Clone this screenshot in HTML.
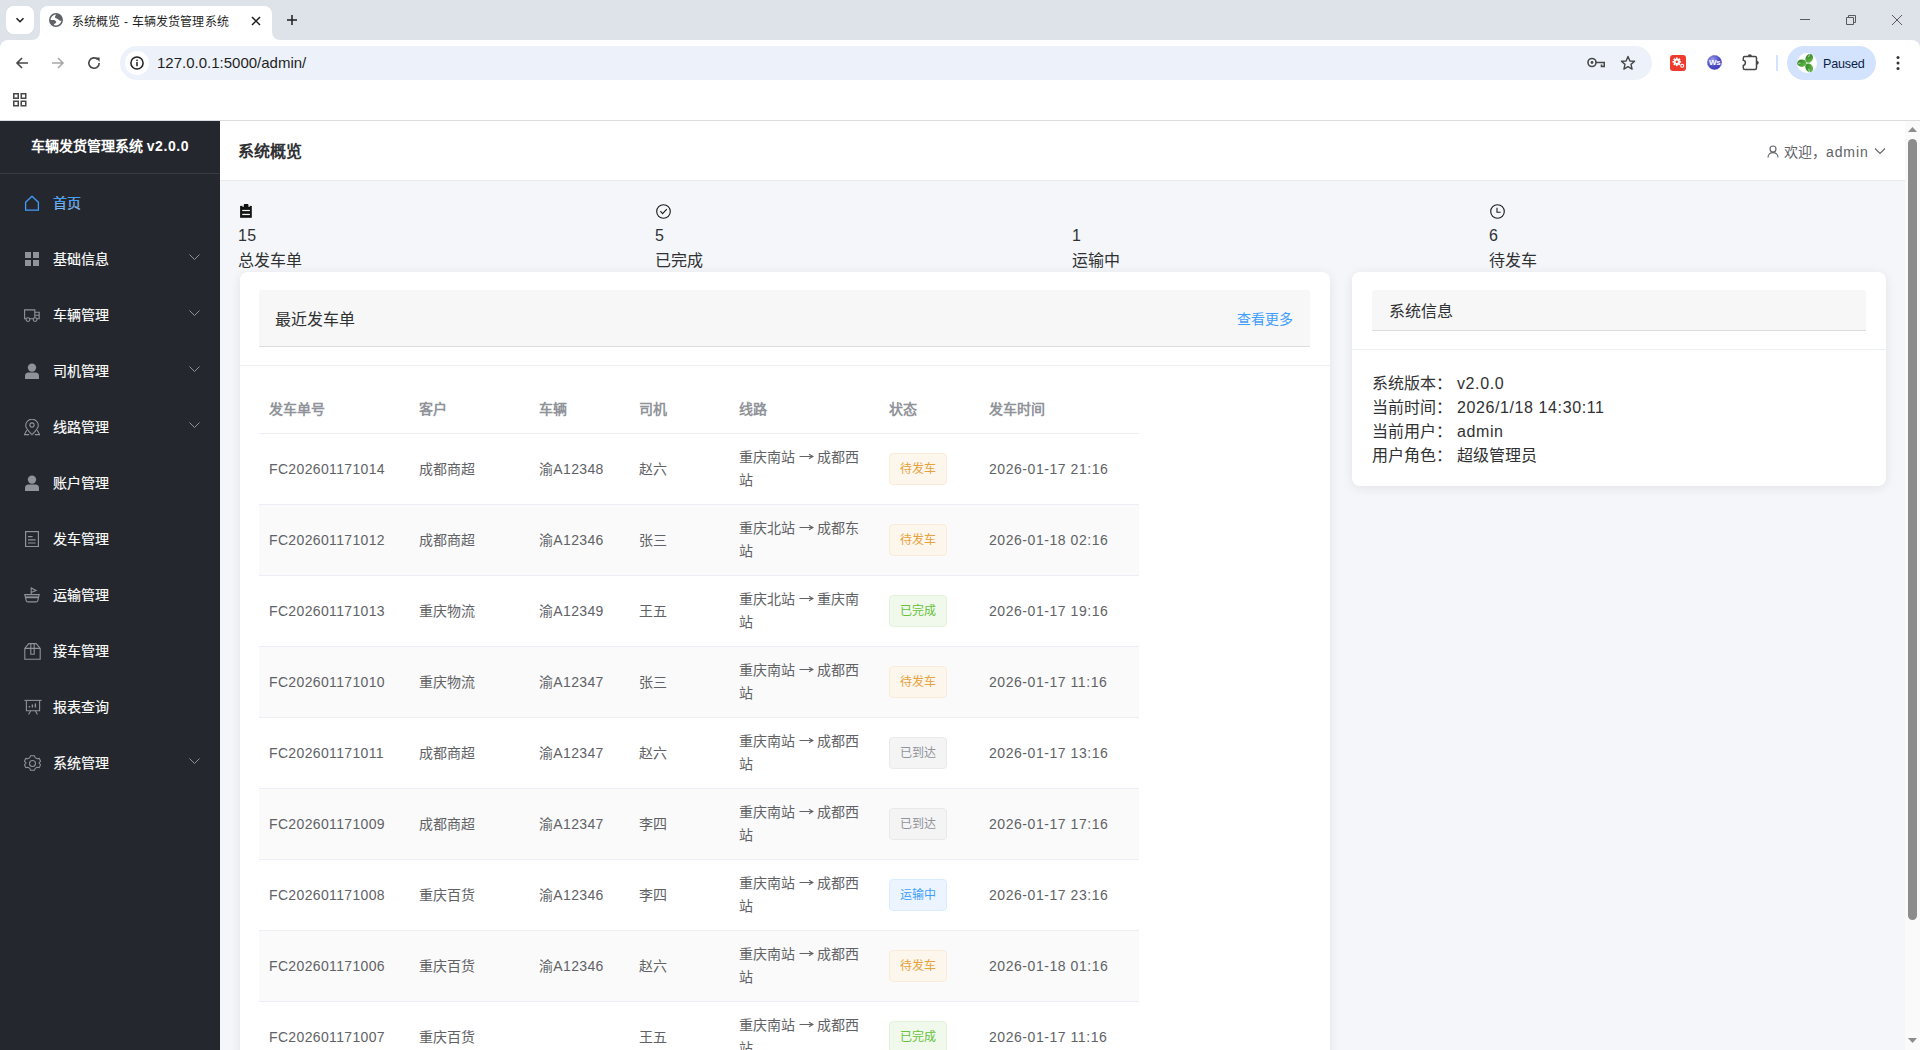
<!DOCTYPE html>
<html lang="zh-CN"><head><meta charset="utf-8"><title>系统概览 - 车辆发货管理系统</title>
<style>
*{box-sizing:border-box;margin:0;padding:0}
html,body{width:1920px;height:1050px;overflow:hidden;background:#fff}
body{position:relative;font-family:"Liberation Sans",sans-serif;color:#303133}
.abs{position:absolute}
svg{display:block}
/* browser chrome */
#tabbar{left:0;top:0;width:1920px;height:48px;background:#dee3ea}
#tabbtn{left:6px;top:6px;width:28px;height:28px;border-radius:8px;background:#fff}
#tab{left:40px;top:6px;width:232px;height:34px;background:#fff;border-radius:8px 8px 0 0}
.flare{width:8px;height:8px;top:32px;background:#fff}
.flare i{position:absolute;left:0;top:0;width:8px;height:8px;background:#dee3ea}
#tabtitle{left:72px;top:14px;letter-spacing:0.15px;font-size:12px;line-height:16px;color:#1f1f1f;white-space:nowrap}
#toolbar{left:0;top:40px;width:1920px;height:80px;background:#fff;border-radius:8px 8px 0 0}
#tbline{left:0;top:120px;width:1920px;height:1px;background:#dadce0}
#omni{left:120px;top:46px;width:1532px;height:34px;border-radius:17px;background:#edf2fa}
#url{left:157px;top:54px;font-size:15px;line-height:18px;color:#1f1f1f;white-space:nowrap}
#paused{left:1787px;top:46px;width:89px;height:34px;border-radius:17px;background:#d3e3fd}
#pausedtxt{left:1823px;top:56px;font-size:12.6px;letter-spacing:-0.2px;line-height:16px;color:#0b1d46;white-space:nowrap}
/* page */
#sidebar{left:0;top:121px;width:220px;height:929px;background:#24272d}
#logo{left:0;top:121px;width:220px;height:53px;border-bottom:1px solid #383b42;color:#fff;font-weight:bold;font-size:14px;line-height:20px;text-align:center;padding-top:15px;white-space:nowrap}
.mi{left:0;width:220px;height:56px;color:#fff;font-size:14px;-webkit-text-stroke:0.15px #fff}
.mi .t{position:absolute;left:53px;top:19px;line-height:20px;white-space:nowrap}
.mi .ic{position:absolute;left:24px;top:21px}
.mi .ar{position:absolute;left:189px;top:24px}
#header{left:220px;top:121px;width:1685px;height:60px;background:#fff;border-bottom:1px solid #e6e9ef}
#htitle{left:238px;top:142px;font-size:16px;line-height:20px;font-weight:bold;color:#303133;white-space:nowrap}
#huser{left:1784px;top:142px;font-size:14px;line-height:20px;color:#606266;white-space:nowrap}
#main{left:220px;top:181px;width:1685px;height:869px;background:#f4f6f9}
#sb{left:1905px;top:121px;width:15px;height:929px;background:#fafafa}
#thumb{left:1908px;top:139px;width:9px;height:781px;border-radius:5px;background:#8c8c8c}


.stat{top:199px;width:417px;font-size:16px;line-height:24px;color:#303133}
.stat .n{letter-spacing:0.3px;position:relative;top:1px}
.stat .l{position:relative;top:2px}
.card{background:#fff;border-radius:8px;box-shadow:0 2px 12px rgba(0,0,0,0.08)}
.chd{border-bottom:1px solid #ebeef5}
.hbox{background:#f7f7f7;border-bottom:1px solid #dcdcdc;border-radius:3px 3px 0 0}
.cell{position:absolute;font-size:14px;line-height:23px;color:#606266;white-space:nowrap}
.th{font-weight:bold;color:#909399}
.row{position:absolute;left:259px;width:880px;height:71px;border-bottom:1px solid #ebeef5}
.row.s{background:#fafafa}
.tag{position:absolute;left:889px;width:58px;height:32px;border-radius:4px;border:1px solid;font-size:12px;line-height:30px;text-align:center}
.tw{background:#fdf6ec;border-color:#faecd8;color:#e6a23c}
.ts{background:#f0f9eb;border-color:#e1f3d8;color:#67c23a}
.ti{background:#f4f4f5;border-color:#e9e9eb;color:#909399}
.tp{background:#ecf5ff;border-color:#d9ecff;color:#409eff}
.lat{letter-spacing:0.35px}
.dat{letter-spacing:0.55px}
.info{position:absolute;left:1372px;font-size:16px;line-height:24px;color:#303133;white-space:nowrap}
</style></head><body>
<div id="tabbar" class="abs"></div>
<div id="tabbtn" class="abs"></div>
<svg class="abs" style="left:14px;top:14px" width="12" height="12" viewBox="0 0 12 12"><path d="M2.5 4.2 L6 7.7 L9.5 4.2" fill="none" stroke="#1f1f1f" stroke-width="1.6"/></svg>
<div id="tab" class="abs"></div>
<div class="abs flare" style="left:32px"><i style="border-bottom-right-radius:8px"></i></div>
<div class="abs flare" style="left:272px"><i style="border-bottom-left-radius:8px"></i></div>
<svg class="abs" style="left:49px;top:13px" width="14" height="14" viewBox="0 0 14 14"><circle cx="7" cy="7" r="6.2" fill="none" stroke="#5f6368" stroke-width="1.5"/><path d="M7.2 0.7 C9.8 0.9 12 2.6 12.9 4.6 L13.3 7.4 C12.4 7.8 11.2 8 10.4 7.5 C9.6 7 9.4 6.1 8.4 5.7 C7.3 5.3 6.1 5.2 6 4.3 C5.9 3.3 6.7 2.3 7.2 1.5 Z" fill="#5f6368"/><path d="M0.7 7 H4.4 C5.6 7 6.6 7.6 7.1 8.6 C7.5 9.6 6.8 10.2 6 10.6 C5.1 11 4.7 11.8 4.5 12.8 C2.3 11.8 0.9 9.8 0.7 7 Z" fill="#5f6368"/></svg>
<div id="tabtitle" class="abs">系统概览 - 车辆发货管理系统</div>
<svg class="abs" style="left:251px;top:16px" width="10" height="10" viewBox="0 0 10 10"><path d="M1 1 L9 9 M9 1 L1 9" stroke="#1f1f1f" stroke-width="1.5"/></svg>
<svg class="abs" style="left:286px;top:14px" width="12" height="12" viewBox="0 0 12 12"><path d="M6 1 V11 M1 6 H11" stroke="#1f1f1f" stroke-width="1.5"/></svg>
<svg class="abs" style="left:1800px;top:14px" width="10" height="10" viewBox="0 0 10 10"><path d="M0 5.5 H10" stroke="#5a5a5a" stroke-width="1"/></svg>
<svg class="abs" style="left:1846px;top:15px" width="10" height="10" viewBox="0 0 10 10"><path d="M0.5 2.5 H7.5 V9.5 H0.5 Z M2.5 2.5 V0.5 H9.5 V7.5 H7.5" fill="none" stroke="#5a5a5a" stroke-width="1"/></svg>
<svg class="abs" style="left:1892px;top:15px" width="10" height="10" viewBox="0 0 10 10"><path d="M0 0 L10 10 M10 0 L0 10" stroke="#5a5a5a" stroke-width="1"/></svg>

<div id="toolbar" class="abs"></div>
<!-- nav icons -->
<svg class="abs" style="left:14px;top:55px" width="16" height="16" viewBox="0 0 16 16"><path d="M14 8 H3 M8 3 L3 8 L8 13" fill="none" stroke="#474747" stroke-width="1.6"/></svg>
<svg class="abs" style="left:50px;top:55px" width="16" height="16" viewBox="0 0 16 16"><path d="M2 8 H13 M8 3 L13 8 L8 13" fill="none" stroke="#a8a8a8" stroke-width="1.6"/></svg>
<svg class="abs" style="left:86px;top:55px" width="16" height="16" viewBox="0 0 16 16"><path d="M13.2 8 A5.2 5.2 0 1 1 11.6 4.3" fill="none" stroke="#474747" stroke-width="1.6"/><path d="M9.2 2.4 H13.6 V6.8 Z" fill="#474747"/></svg>
<div id="omni" class="abs"></div>
<div class="abs" style="left:125px;top:51px;width:24px;height:24px;border-radius:12px;background:#fff"></div>
<svg class="abs" style="left:130px;top:56px" width="14" height="14" viewBox="0 0 14 14"><circle cx="7" cy="7" r="6.1" fill="none" stroke="#1f1f1f" stroke-width="1.5"/><rect x="6.25" y="6" width="1.5" height="4.2" fill="#1f1f1f"/><rect x="6.25" y="3.6" width="1.5" height="1.5" fill="#1f1f1f"/></svg>
<div id="url" class="abs">127.0.0.1:5000/admin/</div>
<svg class="abs" style="left:1587px;top:57px" width="18" height="12" viewBox="0 0 18 12"><circle cx="5" cy="5.5" r="4" fill="none" stroke="#474747" stroke-width="1.6"/><circle cx="5" cy="5.5" r="1.4" fill="#474747"/><path d="M9 5.5 H17.3 V9.5 H14.5 V7.5" fill="none" stroke="#474747" stroke-width="1.6"/></svg>
<svg class="abs" style="left:1620px;top:55px" width="16" height="16" viewBox="0 0 16 16"><path d="M8 1.5 L9.9 6 L14.6 6.3 L11 9.4 L12.1 14.1 L8 11.6 L3.9 14.1 L5 9.4 L1.4 6.3 L6.1 6 Z" fill="none" stroke="#474747" stroke-width="1.4" stroke-linejoin="round"/></svg>
<div class="abs" style="left:1670px;top:55px;width:16px;height:16px;border-radius:3px;background:#ef3b2d"></div>
<svg class="abs" style="left:1670px;top:55px" width="16" height="16" viewBox="0 0 16 16"><g transform="translate(6.8 6.8)"><circle r="3" fill="#fff"/><g fill="#fff"><rect x="-0.9" y="-4.3" width="1.8" height="8.6"/><rect x="-0.9" y="-4.3" width="1.8" height="8.6" transform="rotate(45)"/><rect x="-0.9" y="-4.3" width="1.8" height="8.6" transform="rotate(90)"/><rect x="-0.9" y="-4.3" width="1.8" height="8.6" transform="rotate(135)"/></g><circle r="1.2" fill="#ef3b2d"/></g><circle cx="12.2" cy="10.7" r="1.5" fill="none" stroke="#fff" stroke-width="1.1"/></svg>
<svg class="abs" style="left:1707px;top:55px" width="15" height="15" viewBox="0 0 15 15"><defs><radialGradient id="wsg" cx="0.35" cy="0.3" r="0.8"><stop offset="0" stop-color="#9a9be6"/><stop offset="0.6" stop-color="#4d4ec4"/><stop offset="1" stop-color="#3a3bb0"/></radialGradient></defs><circle cx="7.5" cy="7.5" r="7" fill="url(#wsg)" stroke="#4445bd" stroke-width="0.8" stroke-dasharray="0.9 0.6"/></svg>
<div class="abs" style="left:1709px;top:58px;font-size:8px;line-height:9px;font-weight:bold;color:#fff;white-space:nowrap;letter-spacing:-0.3px">Ws</div>
<svg class="abs" style="left:1742px;top:53px" width="18" height="18" viewBox="0 0 18 18"><path d="M2.8 3.4 H13 A1.5 1.5 0 0 1 14.5 4.9 V14.9 A1.5 1.5 0 0 1 13 16.4 H2.8 A1.5 1.5 0 0 1 1.3 14.9 V12.4 A2.6 2.6 0 0 0 1.3 7.3 V4.9 A1.5 1.5 0 0 1 2.8 3.4 Z" fill="none" stroke="#474747" stroke-width="1.5"/><path d="M5.8 3.6 A2.1 2.4 0 0 1 10 3.6 Z M14.3 7.7 A2.5 2.1 0 0 1 14.3 11.9 Z" fill="#474747"/></svg>
<div class="abs" style="left:1776px;top:55px;width:2px;height:16px;background:#d3e3fd"></div>
<div id="paused" class="abs"></div>
<svg class="abs" style="left:1797px;top:53px" width="20" height="20" viewBox="0 0 20 20"><defs><linearGradient id="clg" x1="0" y1="0" x2="1" y2="1"><stop offset="0" stop-color="#2a7d25"/><stop offset="1" stop-color="#6cc24a"/></linearGradient></defs><circle cx="10" cy="10" r="10" fill="#fff"/><g fill="url(#clg)"><ellipse cx="12.2" cy="5.4" rx="3.6" ry="4.6" transform="rotate(28 12.2 5.4)"/><ellipse cx="4.8" cy="10.2" rx="4.6" ry="3.7"/><ellipse cx="12.2" cy="14.8" rx="3.6" ry="4.6" transform="rotate(-28 12.2 14.8)"/></g><path d="M12.6 1.2 L11.6 4 M1 10.2 H3.6 M12.6 19 L11.6 16" stroke="#fff" stroke-width="0.6"/></svg>
<div id="pausedtxt" class="abs">Paused</div>
<svg class="abs" style="left:1894px;top:55px" width="8" height="16" viewBox="0 0 8 16"><circle cx="4" cy="2.5" r="1.5" fill="#333"/><circle cx="4" cy="8" r="1.5" fill="#333"/><circle cx="4" cy="13.5" r="1.5" fill="#333"/></svg>
<svg class="abs" style="left:12px;top:92px" width="16" height="16" viewBox="0 0 16 16"><g fill="none" stroke="#474747" stroke-width="1.5"><rect x="1.75" y="1.75" width="4.5" height="4.5"/><rect x="9.25" y="1.75" width="4.5" height="4.5"/><rect x="1.75" y="9.25" width="4.5" height="4.5"/><rect x="9.25" y="9.25" width="4.5" height="4.5"/></g></svg>
<div id="tbline" class="abs"></div>

<!-- PAGE -->
<div id="sidebar" class="abs"></div>
<div id="logo" class="abs">车辆发货管理系统 <span style="letter-spacing:0.6px">v2.0.0</span></div>
<div class="abs mi" style="top:174px;color:#409eff"><span class="ic"><svg width="16" height="16" viewBox="0 0 16 16"><path d="M1.6 7.2 L8 1.2 L14.4 7.2 V15.2 H1.6 Z" fill="none" stroke="#409eff" stroke-width="1.3" stroke-linejoin="round"/></svg></span><span class="t">首页</span></div>
<div class="abs mi" style="top:230px"><span class="ic"><svg width="16" height="16" viewBox="0 0 16 16"><g fill="#909399"><rect x="1" y="1" width="6" height="6"/><rect x="9" y="1" width="6" height="6"/><rect x="1" y="9" width="6" height="6"/><rect x="9" y="9" width="6" height="6"/></g></svg></span><span class="t">基础信息</span><span class="ar"><svg width="11" height="6" viewBox="0 0 11 6"><path d="M0.5 0.5 L5.5 5.5 L10.5 0.5" fill="none" stroke="#909399" stroke-width="1"/></svg></span></div>
<div class="abs mi" style="top:286px"><span class="ic"><svg width="16" height="16" viewBox="0 0 16 16"><g fill="none" stroke="#909399" stroke-width="1.1"><path d="M0.6 2.9 H10.8 V11.8 H0.6 Z M10.8 5.3 H15.2 V11.8 H10.8 M10.8 8.2 H15.2"/><circle cx="3.9" cy="12.6" r="1.9" fill="#24272d"/><circle cx="11.1" cy="12.6" r="1.9" fill="#24272d"/></g></svg></span><span class="t">车辆管理</span><span class="ar"><svg width="11" height="6" viewBox="0 0 11 6"><path d="M0.5 0.5 L5.5 5.5 L10.5 0.5" fill="none" stroke="#909399" stroke-width="1"/></svg></span></div>
<div class="abs mi" style="top:342px"><span class="ic"><svg width="16" height="16" viewBox="0 0 16 16"><g fill="#909399"><circle cx="8" cy="4.6" r="4.2"/><path d="M1 16 V12.8 C1 10.6 2.6 9.4 4.6 9.4 H11.4 C13.4 9.4 15 10.6 15 12.8 V16 Z"/></g></svg></span><span class="t">司机管理</span><span class="ar"><svg width="11" height="6" viewBox="0 0 11 6"><path d="M0.5 0.5 L5.5 5.5 L10.5 0.5" fill="none" stroke="#909399" stroke-width="1"/></svg></span></div>
<div class="abs mi" style="top:398px"><span class="ic"><svg width="16" height="17" viewBox="0 0 16 17"><g fill="none" stroke="#909399" stroke-width="1.1"><path d="M8 15.6 C5 12.6 1.7 9.6 1.7 6.5 A6.3 6.3 0 0 1 14.3 6.5 C14.3 9.6 11 12.6 8 15.6 Z"/><circle cx="8" cy="6" r="2.1"/><path d="M2.8 11.2 L0.4 15.6 H5.2 M13.2 11.2 L15.6 15.6 H10.8"/></g></svg></span><span class="t">线路管理</span><span class="ar"><svg width="11" height="6" viewBox="0 0 11 6"><path d="M0.5 0.5 L5.5 5.5 L10.5 0.5" fill="none" stroke="#909399" stroke-width="1"/></svg></span></div>
<div class="abs mi" style="top:454px"><span class="ic"><svg width="16" height="16" viewBox="0 0 16 16"><g fill="#909399"><circle cx="8" cy="4.6" r="4.2"/><path d="M1 16 V12.8 C1 10.6 2.6 9.4 4.6 9.4 H11.4 C13.4 9.4 15 10.6 15 12.8 V16 Z"/></g></svg></span><span class="t">账户管理</span></div>
<div class="abs mi" style="top:510px"><span class="ic"><svg width="16" height="16" viewBox="0 0 16 16"><g fill="none" stroke="#909399" stroke-width="1.2"><rect x="1.6" y="0.6" width="12.8" height="15"/><path d="M4 5.6 H8.6 M4 8.8 H11.6 M4 12 H11.6"/></g></svg></span><span class="t">发车管理</span></div>
<div class="abs mi" style="top:566px"><span class="ic"><svg width="16" height="16" viewBox="0 0 16 16"><g fill="none" stroke="#909399" stroke-width="1.1"><path d="M7.2 7.6 V1 L12 3.4 L7.2 5.6"/><path d="M0.8 7.6 H15.2 L13.8 13.6 C13.6 14.4 13 14.9 12.2 14.9 H3.8 C3 14.9 2.4 14.4 2.2 13.6 Z"/></g><rect x="1.6" y="9.4" width="12.8" height="1.8" fill="#909399"/></svg></span><span class="t">运输管理</span></div>
<div class="abs mi" style="top:622px"><span class="ic"><svg width="17" height="17" viewBox="0 0 17 17"><g fill="none" stroke="#909399" stroke-width="1.1"><path d="M0.8 5.4 L4.8 0.6 H12.2 L16.2 5.4 V16.2 H0.8 Z M0.8 5.4 H16.2"/><path d="M6.8 0.6 V11.2 H10.2 V0.6"/></g></svg></span><span class="t">接车管理</span></div>
<div class="abs mi" style="top:678px"><span class="ic"><svg width="18" height="17" viewBox="0 0 18 17"><g fill="none" stroke="#909399" stroke-width="1.1"><path d="M0.4 1.4 H17.6"/><path d="M2.4 1.4 V11.8 H15.6 V1.4"/><path d="M6.6 11.8 L4.6 15.6 M11.4 11.8 L13.4 15.6"/><path d="M5.4 8.6 V7 M8.4 8.6 V5.6 M11.4 8.6 V4.4" stroke-width="1.4"/></g></svg></span><span class="t">报表查询</span></div>
<div class="abs mi" style="top:734px"><span class="ic"><svg width="17" height="17" viewBox="0 0 17 17"><g fill="none" stroke="#909399" stroke-width="1.1"><path d="M6.4 0.8 H10.6 L11.4 2.8 L13.4 4 L15.6 3.6 L16.4 5 L17 6.6 L15.4 8.5 L17 10.4 L16.4 12 L15.6 13.4 L13.4 13 L11.4 14.2 L10.6 16.2 H6.4 L5.6 14.2 L3.6 13 L1.4 13.4 L0.6 12 L0 10.4 L1.6 8.5 L0 6.6 L0.6 5 L1.4 3.6 L3.6 4 L5.6 2.8 Z" transform="translate(0.5 0) scale(0.94)"/><circle cx="8.5" cy="8.5" r="3"/></g></svg></span><span class="t">系统管理</span><span class="ar"><svg width="11" height="6" viewBox="0 0 11 6"><path d="M0.5 0.5 L5.5 5.5 L10.5 0.5" fill="none" stroke="#909399" stroke-width="1"/></svg></span></div>
<div id="header" class="abs"></div>
<div id="htitle" class="abs">系统概览</div>
<svg class="abs" style="left:1767px;top:145px" width="12" height="13" viewBox="0 0 12 13"><circle cx="6" cy="4" r="3" fill="none" stroke="#606266" stroke-width="1.1"/><path d="M1 12.4 C1 9.2 3.2 7.6 6 7.6 C8.8 7.6 11 9.2 11 12.4" fill="none" stroke="#606266" stroke-width="1.1"/></svg>
<div id="huser" class="abs">欢迎，<span style="letter-spacing:0.9px">admin</span></div>
<svg class="abs" style="left:1874px;top:147px" width="12" height="8" viewBox="0 0 12 8"><path d="M1 1.5 L6 6.5 L11 1.5" fill="none" stroke="#606266" stroke-width="1.1"/></svg>
<div id="main" class="abs"></div>
<div class="abs stat" style="left:238px"><div style="height:24px;padding-top:5px;padding-left:1px"><svg width="14" height="15" viewBox="0 0 14 15"><rect x="1.1" y="1.9" width="11.7" height="11.9" fill="#111"/><rect x="4.8" y="0" width="4.6" height="2.4" rx="0.7" fill="#111"/><rect x="3.5" y="1.9" width="1.2" height="1" fill="#f4f6f9"/><rect x="9.5" y="1.9" width="1.2" height="1" fill="#f4f6f9"/><rect x="3.2" y="5.9" width="7.7" height="1.2" fill="#f4f6f9"/><rect x="3.2" y="9.8" width="7.7" height="1.3" fill="#f4f6f9"/></svg></div><div class="n">15</div><div class="l">总发车单</div></div>
<div class="abs stat" style="left:655px"><div style="height:24px;padding-top:5px;padding-left:1px"><svg width="15" height="15" viewBox="0 0 15 15"><circle cx="7.5" cy="7.5" r="6.8" fill="none" stroke="#1a1a1a" stroke-width="1.1"/><path d="M4.4 7.2 L6.6 9.6 L10.8 5.2" fill="none" stroke="#1a1a1a" stroke-width="1.1"/></svg></div><div class="n">5</div><div class="l">已完成</div></div>
<div class="abs stat" style="left:1072px"><div style="height:24px;padding-top:5px;padding-left:1px"></div><div class="n">1</div><div class="l">运输中</div></div>
<div class="abs stat" style="left:1489px"><div style="height:24px;padding-top:5px;padding-left:1px"><svg width="15" height="15" viewBox="0 0 15 15"><circle cx="7.5" cy="7.5" r="6.8" fill="none" stroke="#1a1a1a" stroke-width="1.1"/><path d="M7 3.8 V8.2 H10.6" fill="none" stroke="#1a1a1a" stroke-width="1.1"/></svg></div><div class="n">6</div><div class="l">待发车</div></div>
<div class="abs card" style="left:240px;top:272px;width:1090px;height:800px"></div>
<div class="abs chd" style="left:240px;top:272px;width:1090px;height:94px"></div>
<div class="abs hbox" style="left:259px;top:290px;width:1051px;height:57px"></div>
<div class="abs" style="left:275px;top:311px;font-size:16px;line-height:18px;color:#303133;white-space:nowrap">最近发车单</div>
<div class="abs" style="left:1237px;top:309px;font-size:14px;line-height:20px;color:#409eff;white-space:nowrap">查看更多</div>
<div class="abs card" style="left:1352px;top:272px;width:534px;height:214px"></div>
<div class="abs chd" style="left:1352px;top:272px;width:534px;height:78px"></div>
<div class="abs hbox" style="left:1372px;top:290px;width:494px;height:41px"></div>
<div class="abs" style="left:1389px;top:303px;font-size:16px;line-height:18px;color:#303133;white-space:nowrap">系统信息</div>
<div class="info" style="top:372px">系统版本：<span style="position:absolute;left:85px;letter-spacing:0.6px;">v2.0.0</span></div>
<div class="info" style="top:396px">当前时间：<span style="position:absolute;left:85px;letter-spacing:0.6px;">2026/1/18 14:30:11</span></div>
<div class="info" style="top:420px">当前用户：<span style="position:absolute;left:85px;letter-spacing:0.6px;">admin</span></div>
<div class="info" style="top:444px">用户角色：<span style="position:absolute;left:85px;">超级管理员</span></div>
<div class="row" style="top:386px;height:48px"></div>
<div class="cell th" style="left:269px;top:398px">发车单号</div>
<div class="cell th" style="left:419px;top:398px">客户</div>
<div class="cell th" style="left:539px;top:398px">车辆</div>
<div class="cell th" style="left:639px;top:398px">司机</div>
<div class="cell th" style="left:739px;top:398px">线路</div>
<div class="cell th" style="left:889px;top:398px">状态</div>
<div class="cell th" style="left:989px;top:398px">发车时间</div>
<div class="row" style="top:434px"></div>
<div class="cell lat" style="left:269px;top:457.5px">FC202601171014</div>
<div class="cell" style="left:419px;top:457.5px">成都商超</div>
<div class="cell lat" style="left:539px;top:457.5px">渝A12348</div>
<div class="cell" style="left:639px;top:457.5px">赵六</div>
<div class="cell" style="left:739px;top:446px">重庆南站<br>站</div>
<div class="cell" style="left:817px;top:446px">成都西</div>
<div class="abs" style="left:799px;top:452px"><svg width="15" height="9" viewBox="0 0 15 9"><path d="M0.5 4.5 H14 M10 2.2 L14 4.5 L10 6.8" fill="none" stroke="#606266" stroke-width="1.05"/></svg></div>
<div class="tag tw" style="top:453px">待发车</div>
<div class="cell dat" style="left:989px;top:457.5px">2026-01-17 21:16</div>
<div class="row s" style="top:505px"></div>
<div class="cell lat" style="left:269px;top:528.5px">FC202601171012</div>
<div class="cell" style="left:419px;top:528.5px">成都商超</div>
<div class="cell lat" style="left:539px;top:528.5px">渝A12346</div>
<div class="cell" style="left:639px;top:528.5px">张三</div>
<div class="cell" style="left:739px;top:517px">重庆北站<br>站</div>
<div class="cell" style="left:817px;top:517px">成都东</div>
<div class="abs" style="left:799px;top:523px"><svg width="15" height="9" viewBox="0 0 15 9"><path d="M0.5 4.5 H14 M10 2.2 L14 4.5 L10 6.8" fill="none" stroke="#606266" stroke-width="1.05"/></svg></div>
<div class="tag tw" style="top:524px">待发车</div>
<div class="cell dat" style="left:989px;top:528.5px">2026-01-18 02:16</div>
<div class="row" style="top:576px"></div>
<div class="cell lat" style="left:269px;top:599.5px">FC202601171013</div>
<div class="cell" style="left:419px;top:599.5px">重庆物流</div>
<div class="cell lat" style="left:539px;top:599.5px">渝A12349</div>
<div class="cell" style="left:639px;top:599.5px">王五</div>
<div class="cell" style="left:739px;top:588px">重庆北站<br>站</div>
<div class="cell" style="left:817px;top:588px">重庆南</div>
<div class="abs" style="left:799px;top:594px"><svg width="15" height="9" viewBox="0 0 15 9"><path d="M0.5 4.5 H14 M10 2.2 L14 4.5 L10 6.8" fill="none" stroke="#606266" stroke-width="1.05"/></svg></div>
<div class="tag ts" style="top:595px">已完成</div>
<div class="cell dat" style="left:989px;top:599.5px">2026-01-17 19:16</div>
<div class="row s" style="top:647px"></div>
<div class="cell lat" style="left:269px;top:670.5px">FC202601171010</div>
<div class="cell" style="left:419px;top:670.5px">重庆物流</div>
<div class="cell lat" style="left:539px;top:670.5px">渝A12347</div>
<div class="cell" style="left:639px;top:670.5px">张三</div>
<div class="cell" style="left:739px;top:659px">重庆南站<br>站</div>
<div class="cell" style="left:817px;top:659px">成都西</div>
<div class="abs" style="left:799px;top:665px"><svg width="15" height="9" viewBox="0 0 15 9"><path d="M0.5 4.5 H14 M10 2.2 L14 4.5 L10 6.8" fill="none" stroke="#606266" stroke-width="1.05"/></svg></div>
<div class="tag tw" style="top:666px">待发车</div>
<div class="cell dat" style="left:989px;top:670.5px">2026-01-17 11:16</div>
<div class="row" style="top:718px"></div>
<div class="cell lat" style="left:269px;top:741.5px">FC202601171011</div>
<div class="cell" style="left:419px;top:741.5px">成都商超</div>
<div class="cell lat" style="left:539px;top:741.5px">渝A12347</div>
<div class="cell" style="left:639px;top:741.5px">赵六</div>
<div class="cell" style="left:739px;top:730px">重庆南站<br>站</div>
<div class="cell" style="left:817px;top:730px">成都西</div>
<div class="abs" style="left:799px;top:736px"><svg width="15" height="9" viewBox="0 0 15 9"><path d="M0.5 4.5 H14 M10 2.2 L14 4.5 L10 6.8" fill="none" stroke="#606266" stroke-width="1.05"/></svg></div>
<div class="tag ti" style="top:737px">已到达</div>
<div class="cell dat" style="left:989px;top:741.5px">2026-01-17 13:16</div>
<div class="row s" style="top:789px"></div>
<div class="cell lat" style="left:269px;top:812.5px">FC202601171009</div>
<div class="cell" style="left:419px;top:812.5px">成都商超</div>
<div class="cell lat" style="left:539px;top:812.5px">渝A12347</div>
<div class="cell" style="left:639px;top:812.5px">李四</div>
<div class="cell" style="left:739px;top:801px">重庆南站<br>站</div>
<div class="cell" style="left:817px;top:801px">成都西</div>
<div class="abs" style="left:799px;top:807px"><svg width="15" height="9" viewBox="0 0 15 9"><path d="M0.5 4.5 H14 M10 2.2 L14 4.5 L10 6.8" fill="none" stroke="#606266" stroke-width="1.05"/></svg></div>
<div class="tag ti" style="top:808px">已到达</div>
<div class="cell dat" style="left:989px;top:812.5px">2026-01-17 17:16</div>
<div class="row" style="top:860px"></div>
<div class="cell lat" style="left:269px;top:883.5px">FC202601171008</div>
<div class="cell" style="left:419px;top:883.5px">重庆百货</div>
<div class="cell lat" style="left:539px;top:883.5px">渝A12346</div>
<div class="cell" style="left:639px;top:883.5px">李四</div>
<div class="cell" style="left:739px;top:872px">重庆南站<br>站</div>
<div class="cell" style="left:817px;top:872px">成都西</div>
<div class="abs" style="left:799px;top:878px"><svg width="15" height="9" viewBox="0 0 15 9"><path d="M0.5 4.5 H14 M10 2.2 L14 4.5 L10 6.8" fill="none" stroke="#606266" stroke-width="1.05"/></svg></div>
<div class="tag tp" style="top:879px">运输中</div>
<div class="cell dat" style="left:989px;top:883.5px">2026-01-17 23:16</div>
<div class="row s" style="top:931px"></div>
<div class="cell lat" style="left:269px;top:954.5px">FC202601171006</div>
<div class="cell" style="left:419px;top:954.5px">重庆百货</div>
<div class="cell lat" style="left:539px;top:954.5px">渝A12346</div>
<div class="cell" style="left:639px;top:954.5px">赵六</div>
<div class="cell" style="left:739px;top:943px">重庆南站<br>站</div>
<div class="cell" style="left:817px;top:943px">成都西</div>
<div class="abs" style="left:799px;top:949px"><svg width="15" height="9" viewBox="0 0 15 9"><path d="M0.5 4.5 H14 M10 2.2 L14 4.5 L10 6.8" fill="none" stroke="#606266" stroke-width="1.05"/></svg></div>
<div class="tag tw" style="top:950px">待发车</div>
<div class="cell dat" style="left:989px;top:954.5px">2026-01-18 01:16</div>
<div class="row" style="top:1002px"></div>
<div class="cell lat" style="left:269px;top:1025.5px">FC202601171007</div>
<div class="cell" style="left:419px;top:1025.5px">重庆百货</div>
<div class="cell lat" style="left:539px;top:1025.5px"></div>
<div class="cell" style="left:639px;top:1025.5px">王五</div>
<div class="cell" style="left:739px;top:1014px">重庆南站<br>站</div>
<div class="cell" style="left:817px;top:1014px">成都西</div>
<div class="abs" style="left:799px;top:1020px"><svg width="15" height="9" viewBox="0 0 15 9"><path d="M0.5 4.5 H14 M10 2.2 L14 4.5 L10 6.8" fill="none" stroke="#606266" stroke-width="1.05"/></svg></div>
<div class="tag ts" style="top:1021px">已完成</div>
<div class="cell dat" style="left:989px;top:1025.5px">2026-01-17 11:16</div>
<div id="sb" class="abs"></div>
<svg class="abs" style="left:1908px;top:127px" width="9" height="5" viewBox="0 0 9 5"><path d="M0 5 L4.5 0 L9 5Z" fill="#8c8c8c"/></svg>
<div id="thumb" class="abs"></div>
<svg class="abs" style="left:1908px;top:1038px" width="9" height="5" viewBox="0 0 9 5"><path d="M0 0 L4.5 5 L9 0Z" fill="#8c8c8c"/></svg>
</body></html>
